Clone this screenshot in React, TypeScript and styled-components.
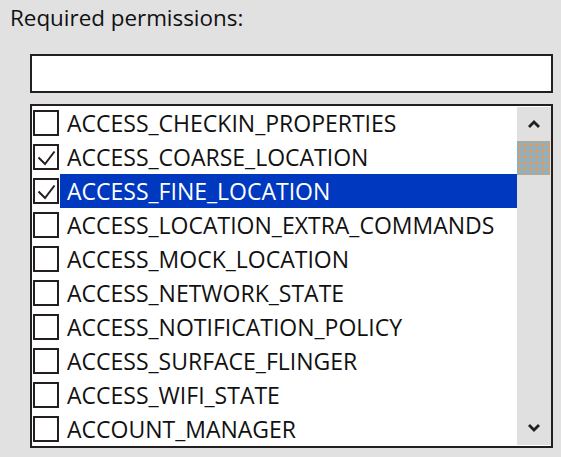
import React from "react";
import styled, { createGlobalStyle } from "styled-components";

const Global = createGlobalStyle`
  html, body { margin: 0; padding: 0; background: #e1e1e1; }
  body { font-family: "Open Sans", "Noto Sans", sans-serif; color: #111; }
`;

const Page = styled.div`
  width: 561px;
  height: 457px;
  background: #e1e1e1;
  box-sizing: border-box;
  padding: 3px 0 0 10px;
  display: flex;
  flex-direction: column;
`;

const Label = styled.div`
  font-size: 22.4px;
  line-height: 30px;
  height: 30px;
  margin-bottom: 21px;
`;

const TextBox = styled.div`
  margin-left: 20px;
  width: 523px;
  height: 39px;
  box-sizing: border-box;
  border: 2px solid #231f20;
  background: #fff;
`;

const ListBox = styled.div`
  margin-top: 11px;
  margin-left: 20px;
  width: 523px;
  height: 344px;
  box-sizing: border-box;
  border: 2px solid #231f20;
  background: #fff;
  display: flex;
`;

const Items = styled.div`
  flex: 1;
  display: flex;
  flex-direction: column;
  padding-left: 1px;
`;

const Row = styled.div`
  height: 34px;
  display: flex;
  align-items: center;
`;

const Box = styled.div`
  width: 26px;
  height: 26px;
  box-sizing: border-box;
  border: 2.5px solid #231f20;
  background: #fff;
  flex: none;
  display: flex;
  align-items: center;
  justify-content: center;
`;

const Text = styled.div<{ $selected: boolean }>`
  flex: 1;
  height: 34px;
  margin-left: 1px;
  padding-left: 7px;
  display: flex;
  align-items: center;
  font-size: 23px;
  white-space: nowrap;
  background: ${(p) => (p.$selected ? "#0038bf" : "transparent")};
  color: ${(p) => (p.$selected ? "#fff" : "#111")};
`;

const ScrollBar = styled.div`
  width: 34px;
  background: #e0e0e0;
  display: flex;
  flex-direction: column;
  margin-top: 1px;
  margin-bottom: 1px;
`;

const ArrowBtn = styled.div`
  height: 34px;
  display: flex;
  align-items: center;
  justify-content: center;
`;

const Thumb = styled.div`
  height: 34px;
  margin-right: 1px;
  background-color: #e39a57;
  background-image: linear-gradient(90deg, #74b9e6 1px, transparent 1px),
    linear-gradient(0deg, #74b9e6 1px, transparent 1px);
  background-size: 3px 3px;
`;

const Track = styled.div`
  flex: 1;
`;

const items: { name: string; checked: boolean; selected?: boolean }[] = [
  { name: "ACCESS_CHECKIN_PROPERTIES", checked: false },
  { name: "ACCESS_COARSE_LOCATION", checked: true },
  { name: "ACCESS_FINE_LOCATION", checked: true, selected: true },
  { name: "ACCESS_LOCATION_EXTRA_COMMANDS", checked: false },
  { name: "ACCESS_MOCK_LOCATION", checked: false },
  { name: "ACCESS_NETWORK_STATE", checked: false },
  { name: "ACCESS_NOTIFICATION_POLICY", checked: false },
  { name: "ACCESS_SURFACE_FLINGER", checked: false },
  { name: "ACCESS_WIFI_STATE", checked: false },
  { name: "ACCOUNT_MANAGER", checked: false },
];

const Check = () => (
  <svg width="21" height="21" viewBox="0 0 21 21">
    <polyline points="2.5,10.5 9,17 18.5,4.5" fill="none" stroke="#231f20" strokeWidth="2" />
  </svg>
);

const Chevron = ({ up }: { up: boolean }) => (
  <svg width="12" height="8" viewBox="0 0 12 8">
    <polyline
      points={up ? "1,7 6,2 11,7" : "1,1 6,6 11,1"}
      fill="none"
      stroke="#231f20"
      strokeWidth="2.8"
    />
  </svg>
);

export default function App() {
  return (
    <>
      <Global />
      <Page>
        <Label>Required permissions:</Label>
        <TextBox />
        <ListBox>
          <Items>
            {items.map((it) => (
              <Row key={it.name}>
                <Box>{it.checked && <Check />}</Box>
                <Text $selected={!!it.selected}>{it.name}</Text>
              </Row>
            ))}
          </Items>
          <ScrollBar>
            <ArrowBtn>
              <Chevron up />
            </ArrowBtn>
            <Thumb />
            <Track />
            <ArrowBtn>
              <Chevron up={false} />
            </ArrowBtn>
          </ScrollBar>
        </ListBox>
      </Page>
    </>
  );
}
